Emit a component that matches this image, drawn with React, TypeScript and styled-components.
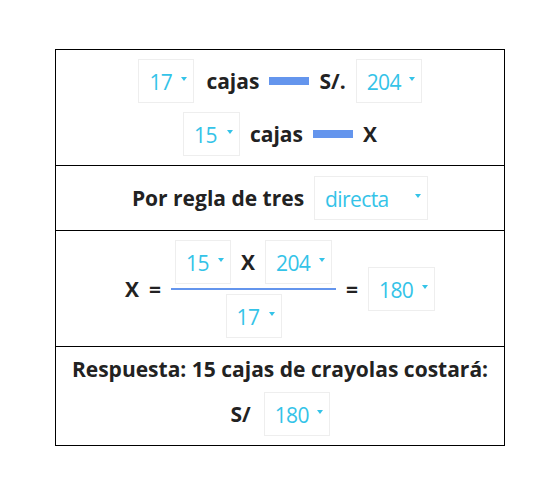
import styled, { createGlobalStyle } from 'styled-components'

const Global = createGlobalStyle`
    body {
        margin: 0;
        font-family: "Open Sans", "Noto Sans", sans-serif;
        color: #222;
        background: #fff;
    }
`

const Page = styled.div`
    padding: 49px 0 0 55px;
`

const Table = styled.div`
    width: 448px;
    border: 1px solid #000;
    display: flex;
    flex-direction: column;
`

const Row = styled.div<{ $pad?: string }>`
    padding: ${(p) => p.$pad || '9px 0'};
    display: flex;
    flex-direction: column;
    align-items: center;
    gap: 9px;
    & + & {
        border-top: 1px solid #000;
    }
`

const Line = styled.div<{ $gap?: number }>`
    display: flex;
    align-items: center;
    justify-content: center;
    gap: ${(p) => p.$gap ?? 10}px;
`

const Label = styled.span`
    font-size: 21px;
    font-weight: 700;
    line-height: 27px;
`

const Bar = styled.span`
    width: 40px;
    height: 8px;
    background: #6495ed;
`

const Box = styled.div<{ $width: number }>`
    box-sizing: border-box;
    height: 44px;
    width: ${(p) => p.$width}px;
    padding: 1px 6px 0 10px;
    border: 1px solid #eee;
    display: flex;
    align-items: center;
    justify-content: space-between;
    color: #34c3e8;
    font-size: 21px;
    letter-spacing: -0.6px;
    cursor: pointer;
`

const Arrow = styled.span`
    width: 0;
    height: 0;
    margin-bottom: 5px;
    border-left: 3px solid transparent;
    border-right: 3px solid transparent;
    border-top: 4px solid #34c3e8;
`

const Fraction = styled.div`
    display: flex;
    flex-direction: column;
    align-items: center;
    gap: 4px;
`

const Numerator = styled(Line)`
    padding: 0 4px;
`

const Rule = styled.div`
    align-self: stretch;
    height: 2px;
    background: #6495ed;
`

const Picker = ({ value, width }: { value: string; width: number }) => (
    <Box $width={width}>
        <span>{value}</span>
        <Arrow />
    </Box>
)

const App = () => {
    return (
        <Page>
            <Global />
            <Table>
                <Row>
                    <Line>
                        <Picker value="17" width={56} />
                        <Label style={{ marginLeft: 2 }}>cajas</Label>
                        <Bar />
                        <Label>S/.</Label>
                        <Picker value="204" width={66} />
                    </Line>
                    <Line>
                        <Picker value="15" width={57} />
                        <Label>cajas</Label>
                        <Bar />
                        <Label>X</Label>
                    </Line>
                </Row>
                <Row $pad="10px 0">
                    <Line>
                        <Label>Por regla de tres</Label>
                        <Picker value="directa" width={114} />
                    </Line>
                </Row>
                <Row $pad="9px 0 8px">
                    <Line $gap={10}>
                        <Label>X</Label>
                        <Label>=</Label>
                        <Fraction>
                            <Numerator $gap={10}>
                                <Picker value="15" width={56} />
                                <Label>X</Label>
                                <Picker value="204" width={67} />
                            </Numerator>
                            <Rule />
                            <Picker value="17" width={56} />
                        </Fraction>
                        <Label>=</Label>
                        <Picker value="180" width={67} />
                    </Line>
                </Row>
                <Row $pad="9px 0 9px">
                    <Label>Respuesta: 15 cajas de crayolas costará:</Label>
                    <Line $gap={13}>
                        <Label>S/</Label>
                        <Picker value="180" width={66} />
                    </Line>
                </Row>
            </Table>
        </Page>
    )
}

export default App
